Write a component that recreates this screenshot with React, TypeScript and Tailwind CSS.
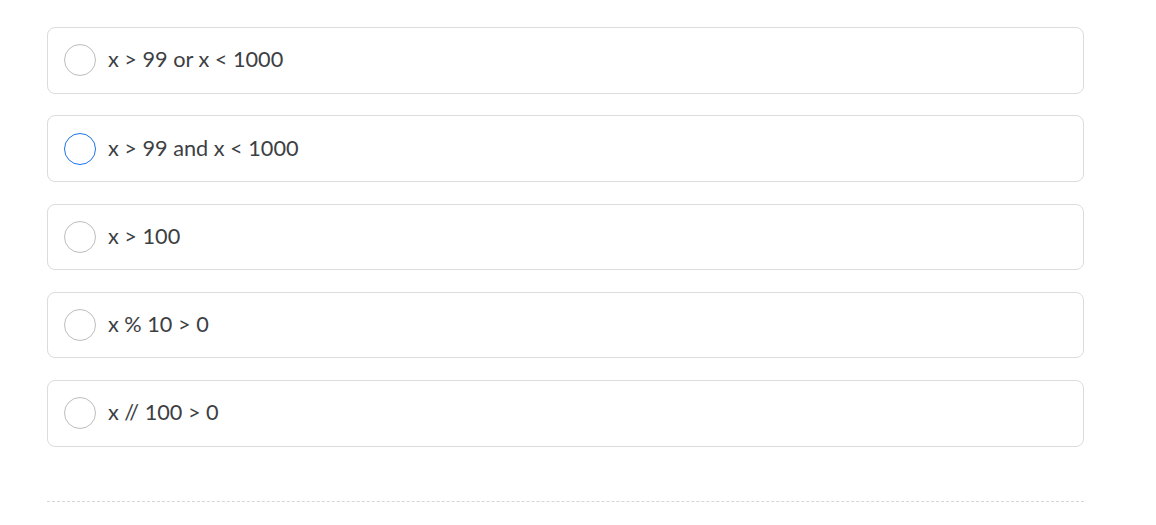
import React from "react";

const options = [
  { label: "x > 99 or x < 1000", selected: false },
  { label: "x > 99 and x < 1000", selected: true },
  { label: "x > 100", selected: false },
  { label: "x % 10 > 0", selected: false },
  { label: "x // 100 > 0", selected: false },
];

export default function App() {
  return (
    <div className="w-[1156px] h-[525px] bg-white pl-[47px] pt-[27px] overflow-hidden" style={{ fontFamily: "Lato, 'Noto Sans', sans-serif" }}>
      <div className="w-[1037px] flex flex-col gap-[21.75px]">
        {options.map((o) => (
          <div key={o.label} className="h-[66.5px] border border-[#dcdcdc] rounded-[8px] flex items-center pl-[16px] gap-[12px]">
            <div className={`w-[32px] h-[32px] shrink-0 rounded-full border ${o.selected ? "border-[#1a73e8]" : "border-[#bdbdbd]"}`} />
            <span className="text-[21.7px] text-[#3c4043] leading-none">{o.label}</span>
          </div>
        ))}
      </div>
      <div className="w-[1037px] mt-[54px] border-t border-dashed border-[#d6d6d6]" />
    </div>
  );
}
